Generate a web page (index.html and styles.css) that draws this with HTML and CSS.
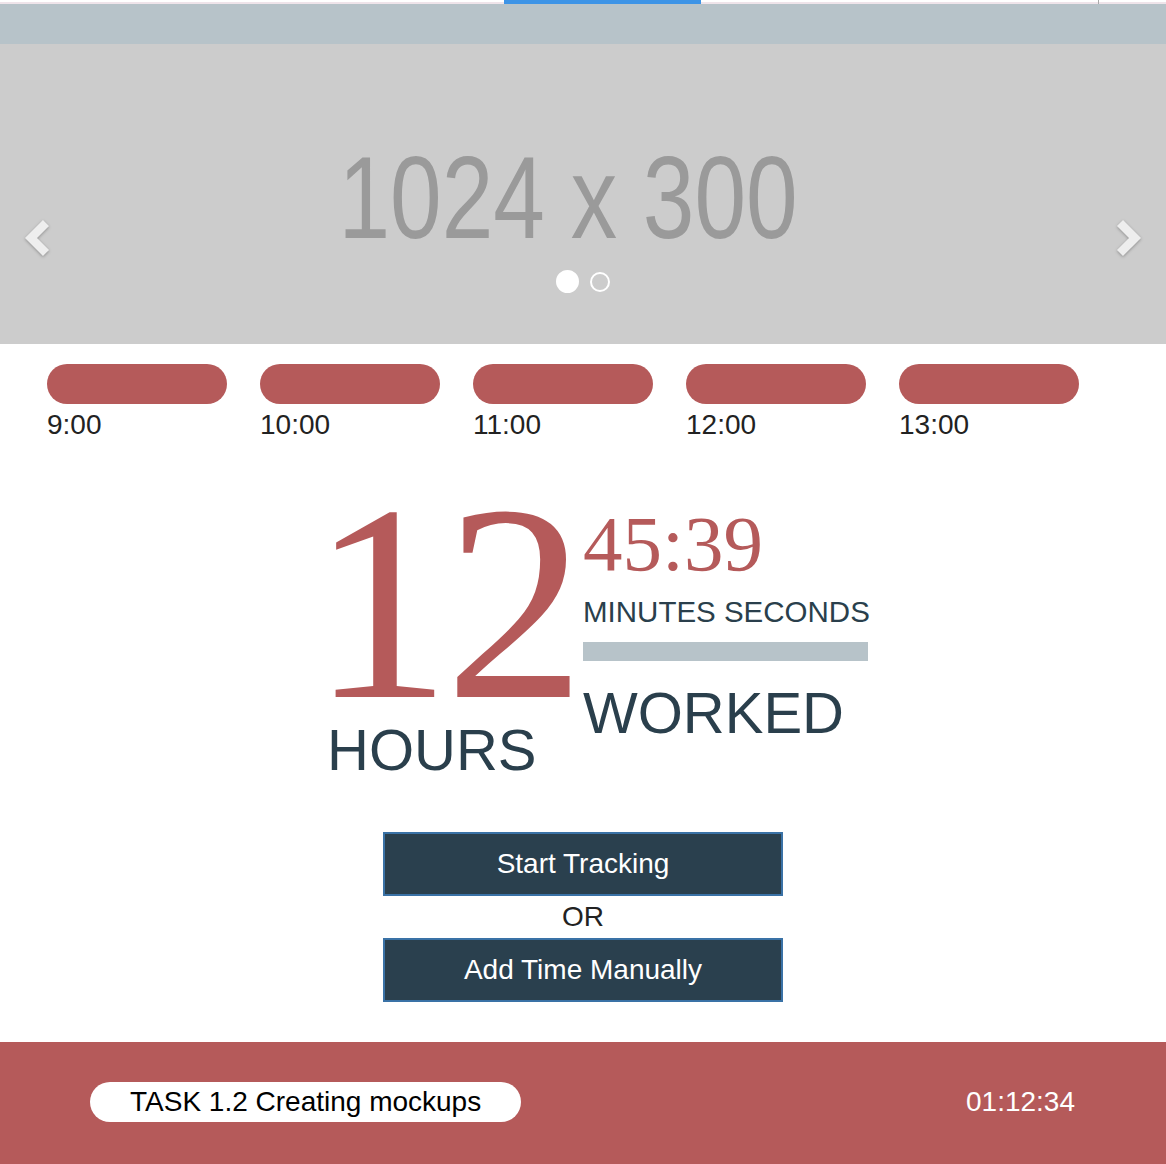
FILE: index.html
```html
<!DOCTYPE html>
<html>
<head>
<meta charset="utf-8">
<title>Time Tracker</title>
<link rel="stylesheet" href="styles.css">
</head>
<body>
  <div class="tabs">
    <div class="tab-gap tab-gap-left"></div>
    <div class="tab-active"></div>
    <div class="tab-gap tab-gap-mid"></div>
    <div class="tab-sep"></div>
    <div class="tab-gap tab-gap-right"></div>
  </div>
  <div class="band"></div>

  <section class="carousel">
    <div class="placeholder"><span class="placeholder-text">1024 x 300</span></div>
    <div class="dots">
      <span class="dot dot-active"></span>
      <span class="dot"></span>
    </div>
    <svg class="arrow arrow-left" width="32" height="44" viewBox="0 0 32 44">
      <polyline points="26,7 11,22 26,37" />
    </svg>
    <svg class="arrow arrow-right" width="32" height="44" viewBox="0 0 32 44">
      <polyline points="6,7 21,22 6,37" />
    </svg>
  </section>

  <section class="slots">
    <div class="slot"><div class="slot-bar"></div><div class="slot-label">9:00</div></div>
    <div class="slot"><div class="slot-bar"></div><div class="slot-label">10:00</div></div>
    <div class="slot"><div class="slot-bar"></div><div class="slot-label">11:00</div></div>
    <div class="slot"><div class="slot-bar"></div><div class="slot-label">12:00</div></div>
    <div class="slot"><div class="slot-bar"></div><div class="slot-label">13:00</div></div>
  </section>

  <section class="timer">
    <div class="timer-left">
      <div class="hours-num">12</div>
      <div class="hours-label">HOURS</div>
    </div>
    <div class="timer-right">
      <div class="minsec">45:39</div>
      <div class="minsec-label">MINUTES SECONDS</div>
      <div class="divider"></div>
      <div class="worked">WORKED</div>
    </div>
  </section>

  <section class="actions">
    <button class="btn">Start Tracking</button>
    <div class="or">OR</div>
    <button class="btn">Add Time Manually</button>
  </section>

  <footer class="footer">
    <div class="task-pill">TASK 1.2 Creating mockups</div>
    <div class="task-time">01:12:34</div>
  </footer>
</body>
</html>
```

FILE: styles.css
```css
* { box-sizing: border-box; }

body {
  margin: 0;
  width: 1166px;
  font-family: "Liberation Sans", Arial, sans-serif;
  background: #ffffff;
  color: #222222;
}

/* top tab strip */
.tabs {
  display: flex;
  height: 4px;
}
.tab-gap {
  border-top: 2px solid #ffffff;
  background: #efe4ea;
}
.tab-gap-left { width: 504px; }
.tab-gap-mid { width: 397px; }
.tab-gap-right { flex: 1; }
.tab-active {
  width: 197px;
  background: #3d94e6;
}
.tab-sep {
  width: 1px;
  background: #a9a9a9;
}

.band {
  height: 40px;
  background: #b7c3c9;
}

/* carousel */
.carousel {
  position: relative;
  height: 300px;
  background: #cccccc;
  padding-top: 96px;
  display: flex;
  flex-direction: column;
  align-items: center;
}
.placeholder {
  height: 116px;
  display: flex;
  justify-content: center;
}
.placeholder-text {
  display: inline-block;
  font-size: 116px;
  line-height: 116px;
  color: #9a9a9a;
  transform: translateX(-15px) scaleX(0.8);
  white-space: nowrap;
}
.dots {
  display: flex;
  align-items: center;
  gap: 11px;
  margin-top: 14px;
}
.dot {
  width: 20px;
  height: 20px;
  border-radius: 50%;
  border: 2px solid #ffffff;
}
.dot-active {
  width: 23px;
  height: 23px;
  background: #ffffff;
}
.arrow {
  position: absolute;
  top: 172px;
  filter: drop-shadow(0 1px 1.5px rgba(0, 0, 0, 0.3));
}
.arrow polyline {
  fill: none;
  stroke: #eeeeee;
  stroke-width: 8.5;
  stroke-linecap: butt;
  stroke-linejoin: miter;
}
.arrow-left { left: 20px; }
.arrow-right { right: 20px; }

/* time slots */
.slots {
  display: flex;
  gap: 33px;
  padding-left: 47px;
  margin-top: 20px;
}
.slot { width: 180px; }
.slot-bar {
  height: 40px;
  border-radius: 20px;
  background: #b55a5a;
}
.slot-label {
  margin-top: 5px;
  font-size: 28px;
  line-height: 32px;
  color: #222222;
}

/* timer */
.timer {
  display: flex;
  justify-content: center;
  align-items: flex-start;
  margin-top: 62px;
  padding-left: 4px;
}
.timer-left {
  width: 281px;
  display: flex;
  flex-direction: column;
}
.hours-num {
  height: 200px;
  padding-left: 9px;
  font-family: "Liberation Serif", "Times New Roman", serif;
  font-size: 280px;
  line-height: 200px;
  letter-spacing: -6px;
  color: #b55a5a;
  white-space: nowrap;
}
.hours-label {
  margin-top: 18px;
  margin-left: 25px;
  font-size: 58px;
  line-height: 58px;
  color: #2a3f4c;
}
.timer-right {
  width: 285px;
  display: flex;
  flex-direction: column;
}
.minsec {
  margin-top: 2px;
  font-family: "Liberation Serif", "Times New Roman", serif;
  font-size: 79px;
  line-height: 77px;
  color: #b55a5a;
}
.minsec-label {
  margin-top: 15px;
  font-size: 29.5px;
  line-height: 29px;
  color: #2a3f4c;
  white-space: nowrap;
}
.divider {
  margin-top: 16px;
  height: 19px;
  background: #b7c3c9;
}
.worked {
  margin-top: 23px;
  font-size: 58px;
  line-height: 58px;
  color: #2a3f4c;
}

/* actions */
.actions {
  display: flex;
  flex-direction: column;
  align-items: center;
  margin-top: 53px;
}
.btn {
  width: 400px;
  height: 64px;
  border: 2px solid #3a72a6;
  background: #2a404e;
  color: #ffffff;
  font-family: "Liberation Sans", Arial, sans-serif;
  font-size: 28px;
  padding: 0;
}
.or {
  height: 42px;
  line-height: 42px;
  font-size: 28px;
  color: #222222;
}

/* footer */
.footer {
  margin-top: 40px;
  height: 122px;
  background: #b55a5a;
  display: flex;
  align-items: center;
  justify-content: space-between;
  padding: 0 91px 3px 90px;
}
.task-pill {
  width: 431px;
  height: 40px;
  border-radius: 20px;
  background: #ffffff;
  padding-left: 40px;
  font-size: 28px;
  line-height: 40px;
  color: #000000;
}
.task-time {
  font-size: 28px;
  color: #ffffff;
}
```
